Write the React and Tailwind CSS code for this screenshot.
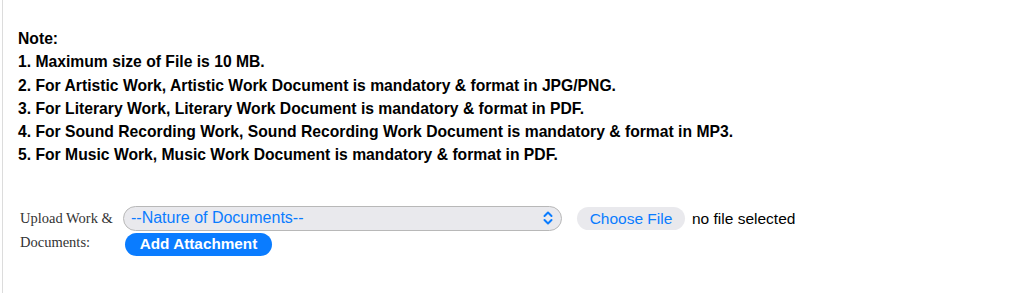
import React from 'react'

const notes = [
  '1. Maximum size of File is 10 MB.',
  '2. For Artistic Work, Artistic Work Document is mandatory & format in JPG/PNG.',
  '3. For Literary Work, Literary Work Document is mandatory & format in PDF.',
  '4. For Sound Recording Work, Sound Recording Work Document is mandatory & format in MP3.',
  '5. For Music Work, Music Work Document is mandatory & format in PDF.',
]

const UpDown = () => (
  <svg width="10" height="14" viewBox="0 0 10 14" fill="none" stroke="#0a7cff" strokeWidth="2" strokeLinecap="round" strokeLinejoin="round">
    <path d="M1.5 5 L5 1.5 L8.5 5" />
    <path d="M1.5 9 L5 12.5 L8.5 9" />
  </svg>
)

const App = () => {
  return (
    <div className="w-[1024px] h-[293px] bg-white overflow-hidden">
      <div className="ml-[2px] h-full border-l border-[#dcdcdc] pl-[15px] pt-[27px]">
        <div className="font-['Liberation_Sans',Arial,sans-serif] font-bold text-[15.7px] leading-[23.3px] text-black">
          <p>Note:</p>
          {notes.map((n) => (
            <p key={n}>{n}</p>
          ))}
        </div>

        <div className="mt-[39px] flex">
          <div className="w-[105px] pl-[2px] font-['Liberation_Serif','Times_New_Roman',serif] text-[14.5px] leading-[24px] text-[#333]">
            <div>Upload Work &amp;</div>
            <div>Documents:</div>
          </div>
          <div className="flex flex-col gap-[2px]">
            <div className="flex items-center font-['Liberation_Sans',Arial,sans-serif] text-[16px]">
              <div className="w-[439px] h-[25px] rounded-full border border-[#b8b8b8] bg-[#e9e9ed] flex items-center justify-between pl-[7px] pr-[8px] text-[#0a7cff]">
                <span>--Nature of Documents--</span>
                <UpDown />
              </div>
              <button className="ml-[15px] h-[23px] w-[108px] rounded-full bg-[#e9e9ed] text-[#0a7cff] text-[15.5px]">Choose File</button>
              <span className="ml-[7px] text-black text-[15.5px]">no file selected</span>
            </div>
            <button className="ml-[2px] w-[147px] h-[23px] rounded-full bg-[#0a7cff] text-white font-bold text-[15.3px] font-['Liberation_Sans',Arial,sans-serif]">
              Add Attachment
            </button>
          </div>
        </div>
      </div>
    </div>
  )
}

export default App
